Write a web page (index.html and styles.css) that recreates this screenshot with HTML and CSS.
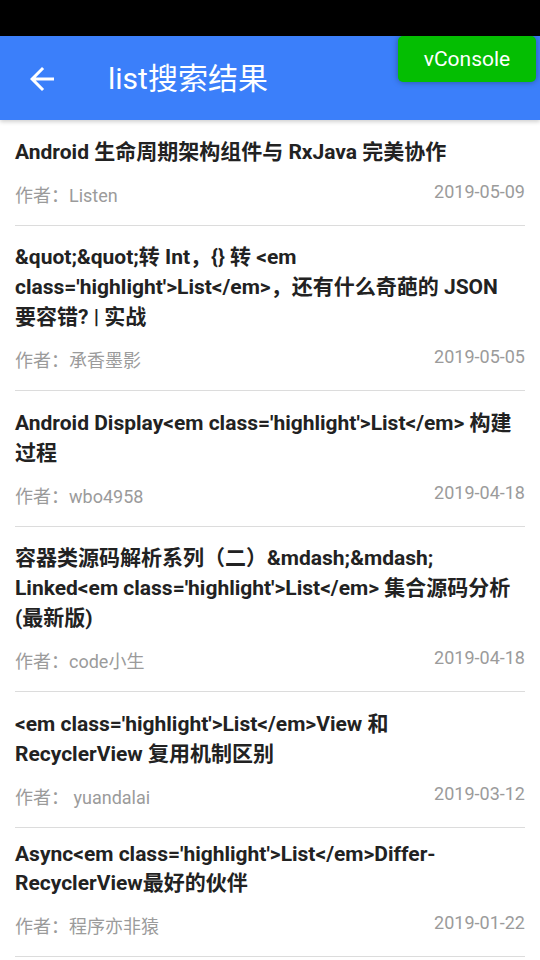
FILE: index.html
```html
<!DOCTYPE html>
<html lang="zh-CN">
<head>
<meta charset="utf-8">
<title>list搜索结果</title>
<link rel="stylesheet" href="styles.css">
</head>
<body>
<div class="statusbar"></div>
<header class="appbar">
  <svg class="back" viewBox="0 0 24 24" width="36" height="36"><path fill="#fff" d="M20 11H7.83l5.59-5.59L12 4l-8 8 8 8 1.41-1.41L7.83 13H20v-2z"/></svg>
  <h1 class="title">list搜索结果</h1>
</header>
<div class="vconsole">vConsole</div>
<ul class="list">
  <li class="item">
    <div class="item-title">Android 生命周期架构组件与 RxJava 完美协作</div>
    <div class="meta"><span class="author">作者：Listen</span><span class="date">2019-05-09</span></div>
  </li>
  <li class="item">
    <div class="item-title">&amp;quot;&amp;quot;转 Int，{} 转 &lt;em class='highlight'&gt;List&lt;/em&gt;，还有什么奇葩的 JSON 要容错? | 实战</div>
    <div class="meta"><span class="author">作者：承香墨影</span><span class="date">2019-05-05</span></div>
  </li>
  <li class="item">
    <div class="item-title">Android Display&lt;em class='highlight'&gt;List&lt;/em&gt; 构建过程</div>
    <div class="meta"><span class="author">作者：wbo4958</span><span class="date">2019-04-18</span></div>
  </li>
  <li class="item">
    <div class="item-title">容器类源码解析系列（二）&amp;mdash;&amp;mdash; Linked&lt;em class='highlight'&gt;List&lt;/em&gt; 集合源码分析(最新版)</div>
    <div class="meta"><span class="author">作者：code小生</span><span class="date">2019-04-18</span></div>
  </li>
  <li class="item">
    <div class="item-title">&lt;em class='highlight'&gt;List&lt;/em&gt;View 和 RecyclerView 复用机制区别</div>
    <div class="meta"><span class="author">作者： yuandalai</span><span class="date">2019-03-12</span></div>
  </li>
  <li class="item">
    <div class="item-title">Async&lt;em class='highlight'&gt;List&lt;/em&gt;Differ-RecyclerView最好的伙伴</div>
    <div class="meta"><span class="author">作者：程序亦非猿</span><span class="date">2019-01-22</span></div>
  </li>
</ul>
</body>
</html>
```

FILE: styles.css
```css
html, body {
  margin: 0;
  padding: 0;
}
body {
  width: 540px;
  height: 960px;
  overflow: hidden;
  background: #fff;
  font-family: Roboto, "Noto Sans CJK SC", sans-serif;
  position: relative;
}
.statusbar {
  height: 36px;
  background: #000;
}
.appbar {
  height: 84px;
  background: #3b7ffa;
  display: flex;
  align-items: center;
  padding-left: 24px;
  box-shadow: 0 2px 4px rgba(0, 0, 0, 0.18);
  position: relative;
  z-index: 1;
}
.back {
  display: block;
  flex: none;
  margin-top: 2px;
}
.title {
  margin: 2px 0 0 48px;
  font-size: 30px;
  font-weight: 400;
  color: #fff;
  line-height: 1;
}
.vconsole {
  position: absolute;
  top: 36px;
  right: 4px;
  width: 138px;
  height: 46px;
  background: #04be02;
  color: #fff;
  font-size: 21px;
  display: flex;
  align-items: center;
  justify-content: center;
  border-radius: 5px;
  box-shadow: 0 0 6px rgba(0, 0, 0, 0.35);
  z-index: 5;
}
.list {
  list-style: none;
  margin: 0;
  padding: 0 15px;
}
.item {
  border-bottom: 1px solid #dcdcdc;
  padding: 14.5px 0 18px;
}
.item-title {
  font-size: 21px;
  font-weight: 700;
  color: #222;
  line-height: normal;
  padding-right: 10px;
}
.meta {
  display: flex;
  justify-content: space-between;
  align-items: flex-start;
  margin-top: 16px;
  font-size: 18px;
  color: #9b9b9b;
  line-height: normal;
}
```
